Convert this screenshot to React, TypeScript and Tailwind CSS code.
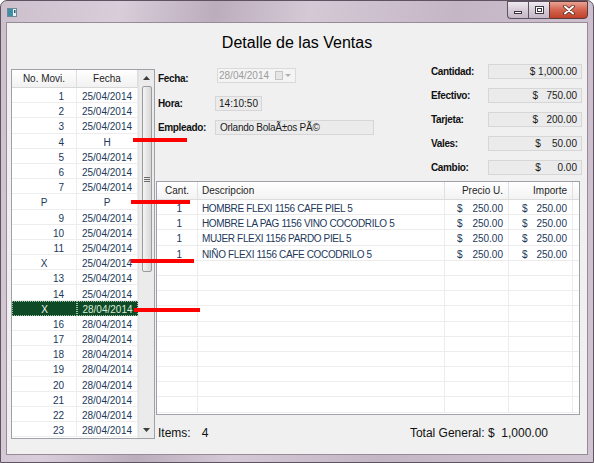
import React from "react";

type LeftRow = { no: string; fecha: string; sel?: boolean };

const leftRows: LeftRow[] = [
  { no: "1", fecha: "25/04/2014" },
  { no: "2", fecha: "25/04/2014" },
  { no: "3", fecha: "25/04/2014" },
  { no: "4", fecha: "H" },
  { no: "5", fecha: "25/04/2014" },
  { no: "6", fecha: "25/04/2014" },
  { no: "7", fecha: "25/04/2014" },
  { no: "P", fecha: "P" },
  { no: "9", fecha: "25/04/2014" },
  { no: "10", fecha: "25/04/2014" },
  { no: "11", fecha: "25/04/2014" },
  { no: "X", fecha: "25/04/2014" },
  { no: "13", fecha: "25/04/2014" },
  { no: "14", fecha: "25/04/2014" },
  { no: "X", fecha: "28/04/2014", sel: true },
  { no: "16", fecha: "28/04/2014" },
  { no: "17", fecha: "28/04/2014" },
  { no: "18", fecha: "28/04/2014" },
  { no: "19", fecha: "28/04/2014" },
  { no: "20", fecha: "28/04/2014" },
  { no: "21", fecha: "28/04/2014" },
  { no: "22", fecha: "28/04/2014" },
  { no: "23", fecha: "28/04/2014" },
];

const detalle = [
  "HOMBRE FLEXI 1156 CAFE PIEL 5",
  "HOMBRE LA PAG 1156 VINO COCODRILO 5",
  "MUJER FLEXI 1156 PARDO PIEL 5",
  "NIÑO FLEXI 1156 CAFE COCODRILO 5",
];

const totales = [
  { label: "Cantidad:", value: "$ 1,000.00" },
  { label: "Efectivo:", value: "$   750.00" },
  { label: "Tarjeta:", value: "$   200.00" },
  { label: "Vales:", value: "$    50.00" },
  { label: "Cambio:", value: "$      0.00" },
];

function TitleBar() {
  return (
    <div className="h-[21px] flex items-start justify-between">
      <div className="mt-[7px] ml-[6px]">
        <svg width="10" height="9" viewBox="0 0 10 9">
          <rect x="0.5" y="0.5" width="9" height="8" fill="#e9f1f4" stroke="#6c8a99" />
          <rect x="1" y="1" width="5" height="7" fill="#3d8fa3" />
          <rect x="7" y="2" width="1.5" height="3" fill="#2f5b6e" />
        </svg>
      </div>
      <div className="flex mr-[5px] h-[18px]">
        <div className="w-[21px] h-full border border-r-0 border-[#5d5360] rounded-bl-[4px] bg-[linear-gradient(to_bottom,#efe9f0,#d7ccd8_50%,#c6b8c7)] flex items-end justify-center pb-[4px]">
          <div className="w-[8px] h-[3px] bg-white border border-[#3b3540]" />
        </div>
        <div className="w-[21px] h-full border border-r-0 border-[#5d5360] bg-[linear-gradient(to_bottom,#efe9f0,#d7ccd8_50%,#c6b8c7)] flex items-center justify-center">
          <div className="w-[9px] h-[8px] border border-[#3b3540] bg-white p-px">
            <div className="w-full h-full border border-[#3b3540]" />
          </div>
        </div>
        <div className="w-[39px] h-full border border-[#5d3a35] rounded-br-[4px] bg-[linear-gradient(to_bottom,#e9a293,#d3644e_50%,#c0402a)] flex items-center justify-center">
          <svg width="12" height="10" viewBox="0 0 12 10">
            <path d="M2 1.5 L10 8.5 M10 1.5 L2 8.5" stroke="#5a2a22" strokeWidth="3.6" strokeLinecap="round" />
            <path d="M2 1.5 L10 8.5 M10 1.5 L2 8.5" stroke="#ffffff" strokeWidth="2" strokeLinecap="round" />
          </svg>
        </div>
      </div>
    </div>
  );
}

function ScrollBar() {
  return (
    <div className="w-[16px] flex flex-col bg-[#ebebeb] border-l border-[#e2e2e2]">
      <div className="h-[16px] flex items-center justify-center">
        <svg width="7" height="4" viewBox="0 0 7 4">
          <path d="M0 4 L3.5 0 L7 4 Z" fill="#3c3c3c" />
        </svg>
      </div>
      <div className="flex-1 pl-[3px] pr-[2px]">
        <div className="h-[186px] rounded-[2px] border border-[#9b9b9b] bg-[linear-gradient(to_right,#f4f4f4,#e6e6e6_50%,#d6d6d6)] flex flex-col items-center justify-center gap-[1px]">
          <div className="w-[6px] h-px bg-[#6b6b6b]" />
          <div className="w-[6px] h-px bg-[#6b6b6b]" />
          <div className="w-[6px] h-px bg-[#6b6b6b]" />
        </div>
      </div>
      <div className="h-[16px] flex items-center justify-center">
        <svg width="7" height="4" viewBox="0 0 7 4">
          <path d="M0 0 L3.5 4 L7 0 Z" fill="#3c3c3c" />
        </svg>
      </div>
    </div>
  );
}

function LeftTable() {
  return (
    <div className="ml-[4px] mt-[6px] w-[144px] h-[370px] border border-[#9ea2a8] bg-white flex">
      <div className="w-[126px] flex flex-col overflow-hidden">
        <div className="h-[18px] shrink-0 flex border-b border-[#d8d8d8] bg-[linear-gradient(to_bottom,#ffffff,#f1f1f1)] text-[#1e1e1e] text-[10px]">
          <div className="w-[65px] border-r border-[#dedede] flex items-center justify-center">No. Movi.</div>
          <div className="w-[61px] border-r border-[#dedede] flex items-center justify-center">Fecha</div>
        </div>
        {leftRows.map((r, i) => {
          const numeric = /^\d+$/.test(r.no);
          return (
            <div
              key={i}
              className={
                r.sel
                  ? "h-[15.2px] shrink-0 flex text-[10px] leading-none bg-[#0d4a25] text-[#f2f7f2]"
                  : "h-[15.2px] shrink-0 flex text-[10px] leading-none text-[#22385a] border-b border-[#ededed]"
              }
            >
              <div
                className={
                  (numeric ? "justify-end pr-[12px] " : "justify-center ") +
                  (r.sel
                    ? "w-[65px] pt-[3px] flex items-center border border-dotted border-[#9fc0a8]"
                    : "w-[65px] pt-[4px] flex items-center border-r border-[#ededed]")
                }
              >
                {r.no}
              </div>
              <div
                className={
                  r.sel
                    ? "w-[61px] pt-[3px] flex items-center justify-center border border-dotted border-[#9fc0a8] text-[#d9ecd9]"
                    : "w-[61px] pt-[4px] flex items-center justify-center border-r border-[#ededed]"
                }
              >
                {r.fecha}
              </div>
            </div>
          );
        })}
      </div>
      <ScrollBar />
    </div>
  );
}

function Field({ w, children, className }: { w: string; children: React.ReactNode; className?: string }) {
  return (
    <div
      className={
        w +
        " h-[15px] border border-[#d6d6d6] bg-[#ebebeb] flex items-center text-[10px] leading-none text-[#1a1a1a] " +
        (className || "")
      }
    >
      {children}
    </div>
  );
}

function InfoArea() {
  return (
    <div className="h-[118px] flex justify-between">
      <div className="pl-[2px] flex flex-col">
        <div className="mt-[5px] h-[15px] flex items-center">
          <div className="w-[59px] mt-[5px] text-[10px] font-bold tracking-[-0.35px] text-[#111]">Fecha:</div>
          <div className="w-[79px] h-[15px] border border-[#dadada] bg-[#f4f4f4] flex items-center justify-between pl-[1px] pr-[4px] text-[10px] text-[#9c9c9c]">
            <span>28/04/2014</span>
            <span className="flex items-center gap-[2px]">
              <span className="w-[8px] h-[9px] border border-[#c4c4c4] bg-[#e6e6e6]" />
              <svg width="6" height="3" viewBox="0 0 6 3">
                <path d="M0 0 L3 3 L6 0 Z" fill="#b0b0b0" />
              </svg>
            </span>
          </div>
        </div>
        <div className="mt-[13px] h-[15px] flex items-center">
          <div className="w-[57px] text-[10px] font-bold tracking-[-0.35px] text-[#111]">Hora:</div>
          <Field w="w-[47px]" className="justify-center">14:10:50</Field>
        </div>
        <div className="mt-[9px] h-[15px] flex items-center">
          <div className="w-[57px] text-[10px] font-bold tracking-[-0.35px] text-[#111]">Empleado:</div>
          <Field w="w-[159px]" className="pl-[4px] tracking-[-0.25px]">Orlando BolaÃ±os PÃ©</Field>
        </div>
      </div>
      <div className="w-[152px] pr-px pt-px flex flex-col gap-[9px]">
        {totales.map((t) => (
          <div key={t.label} className="h-[15px] flex items-center">
            <div className="w-[57px] text-[10px] font-bold tracking-[-0.35px] text-[#111]">{t.label}</div>
            <Field w="w-[94px]" className="justify-end pr-[4px] whitespace-pre">
              {t.value}
            </Field>
          </div>
        ))}
      </div>
    </div>
  );
}

function DetailTable() {
  const empty = Array.from({ length: 10 });
  const cell = "h-full flex items-center border-r border-[#ececec]";
  return (
    <div className="w-[424px] h-[234px] border border-[#9ea2a8] bg-white flex flex-col overflow-hidden">
      <div className="h-[18px] shrink-0 flex border-b border-[#dcdcdc] bg-[linear-gradient(to_bottom,#ffffff,#f3f3f3)] text-[10px] text-[#1e1e1e]">
        <div className="w-[41px] h-full flex items-center justify-center border-r border-[#e0e0e0]">Cant.</div>
        <div className="w-[247px] h-full flex items-center pl-[4px] border-r border-[#e0e0e0]">Descripcion</div>
        <div className="w-[64px] h-full flex items-center justify-end pr-[5px] border-r border-[#e0e0e0]">Precio U.</div>
        <div className="w-[64px] h-full flex items-center justify-end pr-[5px] border-r border-[#e0e0e0]">Importe</div>
        <div className="flex-1" />
      </div>
      {detalle.map((d) => (
        <div key={d} className="h-[15.2px] shrink-0 flex border-b border-[#ececec] text-[10px] leading-none text-[#22385a]">
          <div className={"w-[41px] justify-end pr-[15px] pt-[4px] " + cell}>1</div>
          <div className={"w-[247px] pl-[4px] pt-[4px] tracking-[-0.35px] " + cell}>{d}</div>
          <div className={"w-[64px] justify-between pl-[12px] pr-[5px] pt-[4px] " + cell}>
            <span>$</span>
            <span>250.00</span>
          </div>
          <div className={"w-[64px] justify-between pl-[13px] pr-[5px] pt-[4px] " + cell}>
            <span>$</span>
            <span>250.00</span>
          </div>
          <div className="flex-1" />
        </div>
      ))}
      {empty.map((_, i) => (
        <div key={i} className="h-[15.2px] shrink-0 flex border-b border-[#ededed]">
          <div className={"w-[41px] " + cell} />
          <div className={"w-[247px] " + cell} />
          <div className={"w-[64px] " + cell} />
          <div className={"w-[64px] " + cell} />
          <div className="flex-1" />
        </div>
      ))}
    </div>
  );
}

export default function App() {
  return (
    <div className="w-[594px] h-[463px] relative overflow-hidden bg-white font-['Liberation_Sans',Arial,sans-serif]">
      <div className="w-full h-full flex flex-col rounded-t-[7px] border border-[#5e5461] bg-[linear-gradient(100deg,#cdc0cd_0%,#d9cdd9_18%,#bcadbd_32%,#d5c9d5_46%,#c5b6c6_68%,#d1c4d1_100%)]">
        <TitleBar />
        <div className="mx-[5px] mb-[7px] flex-1 flex flex-col border border-[#978b98] bg-[#f0f0f0]">
          <div className="h-[40px] pt-[11px] text-center text-[16px] leading-[18px] text-black">
            Detalle de las Ventas
          </div>
          <div className="flex-1 flex">
            <LeftTable />
            <div className="ml-px w-[427px] flex flex-col">
              <InfoArea />
              <DetailTable />
              <div className="pt-[11px] flex justify-between text-[12px] leading-[14px] text-[#111] pl-[2px] pr-[35px]">
                <div>
                  Items:<span className="ml-[11px]">4</span>
                </div>
                <div className="whitespace-pre">Total General: $  1,000.00</div>
              </div>
            </div>
          </div>
        </div>
      </div>
      <div className="absolute left-[133px] top-[138px] w-[54px] h-[4px] bg-[#ff0000]" />
      <div className="absolute left-[131px] top-[200px] w-[59px] h-[4px] bg-[#ff0000]" />
      <div className="absolute left-[131px] top-[259px] w-[63px] h-[4px] bg-[#ff0000]" />
      <div className="absolute left-[134px] top-[308px] w-[66px] h-[4px] bg-[#ff0000]" />
    </div>
  );
}
